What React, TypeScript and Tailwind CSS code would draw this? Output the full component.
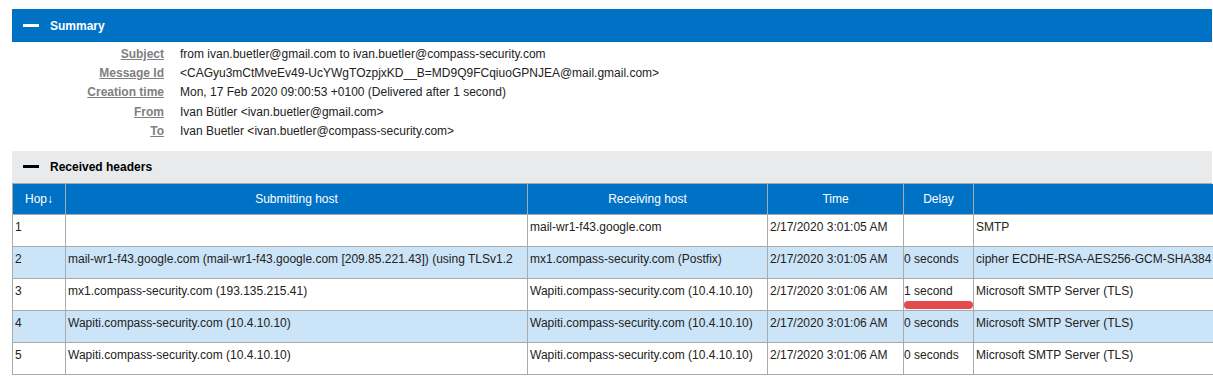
import React from "react";

const summary: [string, string][] = [
  ["Subject", "from ivan.buetler@gmail.com to ivan.buetler@compass-security.com"],
  ["Message Id", "<CAGyu3mCtMveEv49-UcYWgTOzpjxKD__B=MD9Q9FCqiuoGPNJEA@mail.gmail.com>"],
  ["Creation time", "Mon, 17 Feb 2020 09:00:53 +0100 (Delivered after 1 second)"],
  ["From", "Ivan Bütler <ivan.buetler@gmail.com>"],
  ["To", "Ivan Buetler <ivan.buetler@compass-security.com>"],
];

const rows = [
  ["1", "", "mail-wr1-f43.google.com", "2/17/2020 3:01:05 AM", "", "SMTP"],
  ["2", "mail-wr1-f43.google.com (mail-wr1-f43.google.com [209.85.221.43]) (using TLSv1.2", "mx1.compass-security.com (Postfix)", "2/17/2020 3:01:05 AM", "0 seconds", "cipher ECDHE-RSA-AES256-GCM-SHA384"],
  ["3", "mx1.compass-security.com (193.135.215.41)", "Wapiti.compass-security.com (10.4.10.10)", "2/17/2020 3:01:06 AM", "1 second", "Microsoft SMTP Server (TLS)"],
  ["4", "Wapiti.compass-security.com (10.4.10.10)", "Wapiti.compass-security.com (10.4.10.10)", "2/17/2020 3:01:06 AM", "0 seconds", "Microsoft SMTP Server (TLS)"],
  ["5", "Wapiti.compass-security.com (10.4.10.10)", "Wapiti.compass-security.com (10.4.10.10)", "2/17/2020 3:01:06 AM", "0 seconds", "Microsoft SMTP Server (TLS)"],
];

export default function App() {
  return (
    <div
      className="bg-white w-[1213px] h-[382px] overflow-hidden pl-[12px] pt-[9px] text-[12px] text-[#222]"
      style={{ fontFamily: '"Liberation Sans", Arial, sans-serif' }}
    >
      <div className="w-[1200px]">
        <div className="h-[33px] bg-[#0072c6] flex items-center">
          <div className="ml-[11px] w-[16px] h-[3px] bg-white" />
          <div className="ml-[11px] font-bold text-white">Summary</div>
        </div>
        <div className="pt-[2px] pb-[10px]">
          {summary.map(([k, v]) => (
            <div key={k} className="flex h-[19.4px] items-center">
              <div className="w-[152px] text-right font-bold text-[#808080] underline">{k}</div>
              <div className="ml-[16px] whitespace-nowrap">{v}</div>
            </div>
          ))}
        </div>
        <div className="h-[33px] bg-[#e9eaec] flex items-center border-b border-[#aaa]">
          <div className="ml-[11px] w-[16px] h-[3px] bg-black" />
          <div className="ml-[11px] font-bold text-black">Received headers</div>
        </div>
        <table className="table-fixed border-collapse w-[1200px]">
          <colgroup>
            <col className="w-[53px]" />
            <col className="w-[462px]" />
            <col className="w-[240px]" />
            <col className="w-[136px]" />
            <col className="w-[70px]" />
            <col className="w-[239px]" />
          </colgroup>
          <thead>
            <tr className="bg-[#0072c6] text-white h-[31px]">
              <th className="font-normal border-l border-r border-[#aaa]">Hop↓</th>
              <th className="font-normal border-r border-[#aaa]">Submitting host</th>
              <th className="font-normal border-r border-[#aaa]">Receiving host</th>
              <th className="font-normal border-r border-[#aaa]">Time</th>
              <th className="font-normal border-r border-[#aaa]">Delay</th>
              <th className="font-normal"></th>
            </tr>
          </thead>
          <tbody>
            {rows.map((r, i) => (
              <tr key={i} className={(i % 2 === 1 ? "bg-[#cce4f7] " : "bg-white ") + "h-[32px] border-t border-b border-[#aaa]"}>
                {r.map((c, j) => (
                  <td
                    key={j}
                    className={
                      "align-top p-0 " +
                      (j === 0 ? "border-l border-r border-[#aaa]" : j < 5 ? "border-r border-[#aaa]" : "")
                    }
                  >
                    <div className="relative">
                      <div className={"pt-[3px] leading-[18px] whitespace-nowrap overflow-hidden " + (j === 4 ? "pl-0" : "pl-[2px]")}>
                        {c}
                      </div>
                      {i === 2 && j === 4 ? (
                        <div className="absolute left-0 top-[22px] w-[69px] h-[8px] rounded-full bg-[#e34b50]" />
                      ) : null}
                    </div>
                  </td>
                ))}
              </tr>
            ))}
          </tbody>
        </table>
      </div>
    </div>
  );
}
